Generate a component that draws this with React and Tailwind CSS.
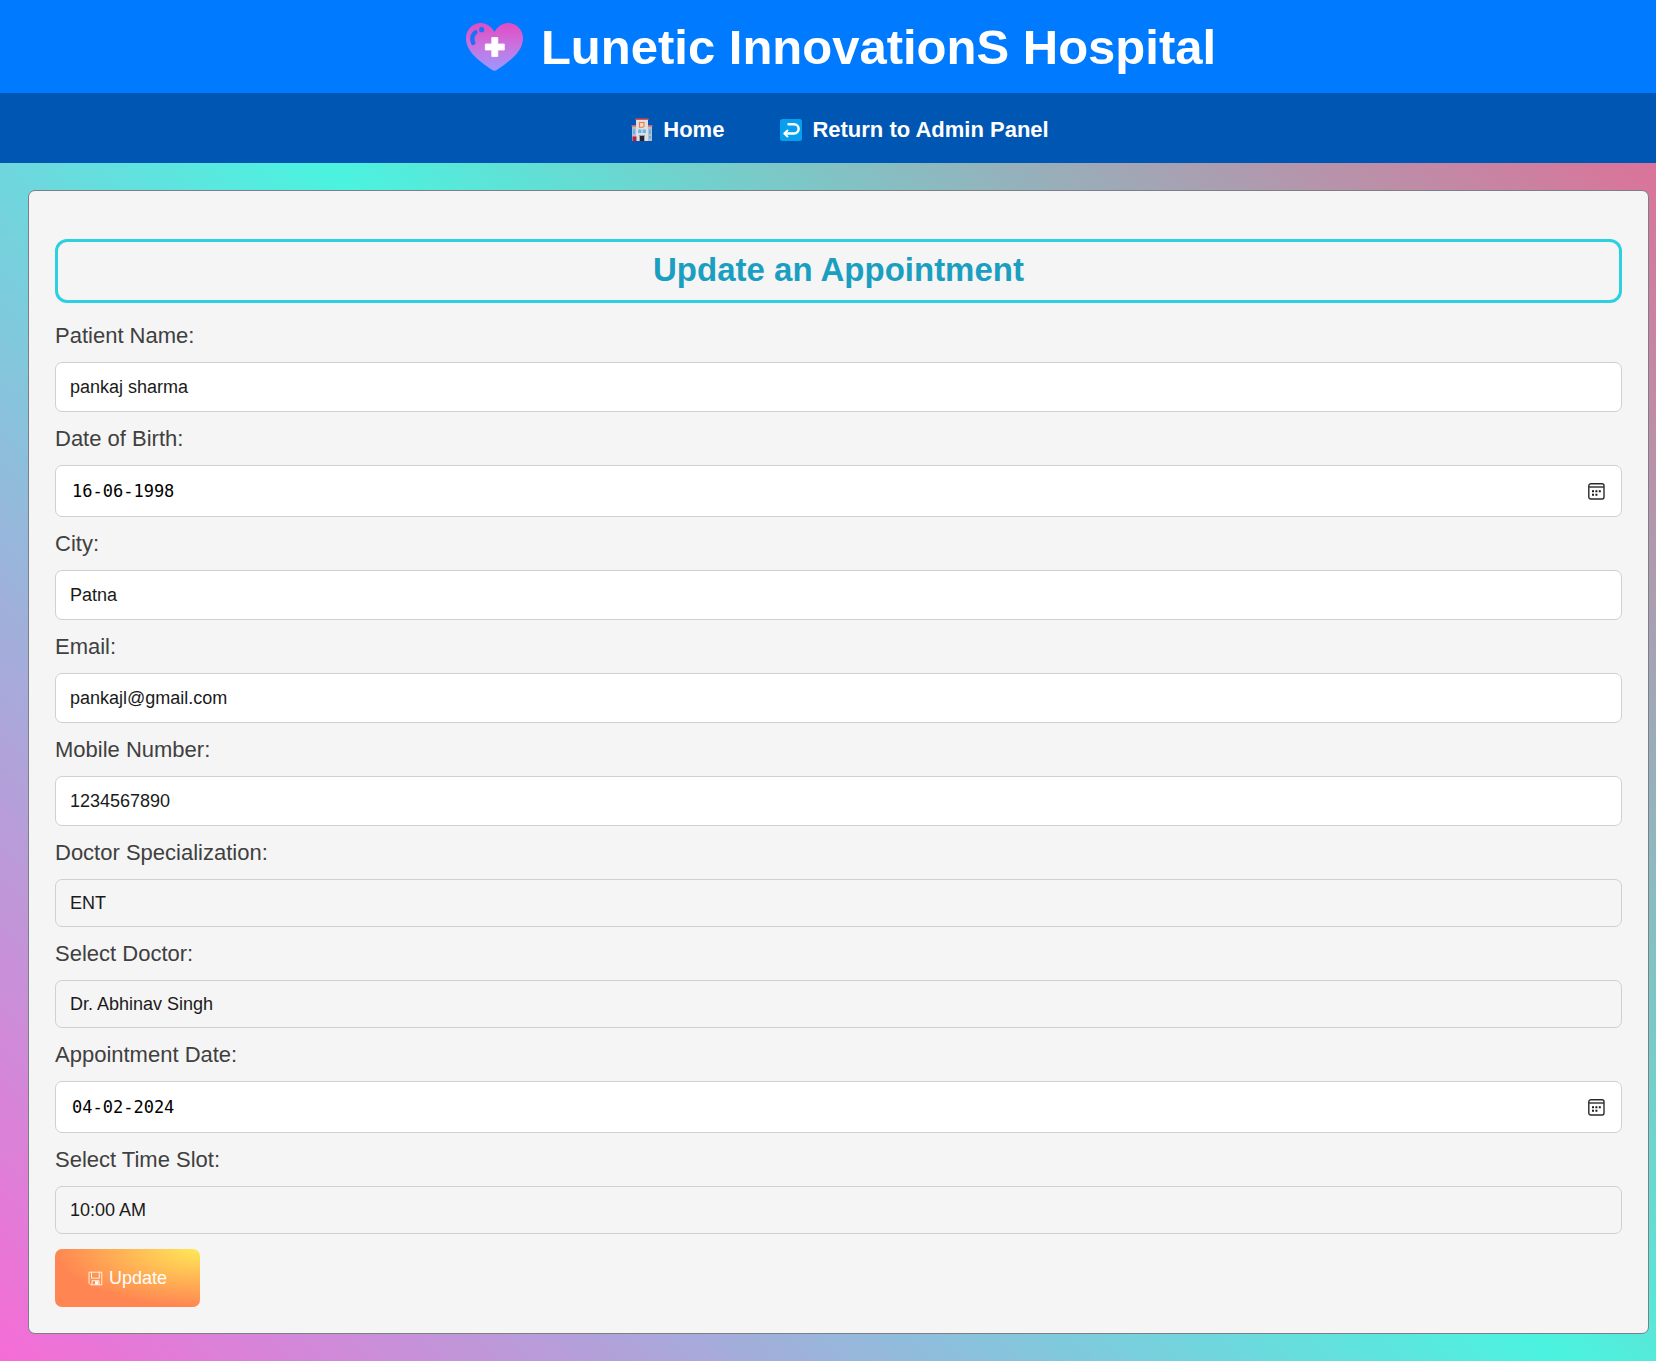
import { useState } from "react";

function HeartLogo() {
  return (
    <svg viewBox="0 0 57 48" className="h-12 w-[57px] shrink-0" aria-hidden="true">
      <defs>
        <linearGradient id="heart" x1="0" y1="0" x2="0" y2="1">
          <stop offset="0.05" stopColor="#e04fc6" />
          <stop offset="0.5" stopColor="#c873e0" />
          <stop offset="1" stopColor="#9a98ff" />
        </linearGradient>
      </defs>
      <path
        d="M28.500 9C25.500 3.500 20.500 0 15 0C6.500 0 0 6.700 0 15.200C0 29 14 38.500 25.800 46.700C27.500 48 29.500 48 31.200 46.700C43 38.500 57 29 57 15.200C57 6.700 50.500 0 42 0C36.500 0 31.500 3.500 28.500 9Z"
        fill="url(#heart)"
      />
      <path d="M9.500 9.300C6.500 11.500 5.600 15.500 7.200 20" fill="none" stroke="#1c72f6" strokeWidth="4.400" strokeLinecap="round" />
      <circle cx="15.700" cy="6.700" r="2.600" fill="#1c72f6" />
      <path d="M25.800 14.500h6v6.500h6.500v6h-6.500v6.500h-6v-6.500h-6.500v-6h6.500z" fill="#fff" stroke="#fff" strokeWidth="0.800" strokeLinejoin="round" />
    </svg>
  );
}

function HospitalIcon() {
  return (
    <svg viewBox="0 0 22 24" className="h-6 w-[22px] shrink-0" aria-hidden="true">
      <rect x="1" y="8" width="5" height="15" fill="#b4bfce" />
      <rect x="16" y="8" width="5" height="15" fill="#b4bfce" />
      <rect x="0.500" y="7" width="5" height="1.600" fill="#d9625f" />
      <rect x="16.500" y="7" width="5" height="1.600" fill="#d9625f" />
      <rect x="5" y="1.500" width="12" height="21.500" fill="#dfdee6" />
      <rect x="4.300" y="0.500" width="13.400" height="1.600" rx="0.500" fill="#e2504c" />
      <path d="M8.500 4.500h4.500v3.800l-1.200 1h-3.300z" fill="#f7dccb" stroke="#ef7a3c" strokeWidth="1.100" />
      <path d="M7.200 11.500h3.200v3.500H7.200zM11.600 11.500h3.200v3.500h-3.200zM2 11.500h2v4.500H2zM18 11.500h2v4.500h-2z" fill="#5cb4ea" />
      <path d="M18 18h2v2.500h-2z" fill="#5cb4ea" />
      <rect x="8" y="17" width="6" height="1.200" fill="#9aa3b2" />
      <rect x="8.700" y="18" width="4.600" height="5" fill="#23262f" />
      <rect x="1.500" y="18.500" width="4" height="4.500" fill="#b8243e" />
    </svg>
  );
}

function ReturnIcon() {
  return (
    <svg viewBox="0 0 22 22" className="size-[22px] shrink-0" aria-hidden="true">
      <rect width="22" height="22" rx="2.500" fill="#08a0ee" />
      <path d="M8.500 5.200h5.500a4.500 4.500 0 0 1 0 9.300H5.500" fill="none" stroke="#fff" strokeWidth="2.500" strokeLinecap="round" />
      <path d="M7.500 11.600l-3.200 2.900l3.200 2.900" fill="none" stroke="#fff" strokeWidth="2" strokeLinecap="round" strokeLinejoin="round" />
    </svg>
  );
}

function CalendarIcon() {
  return (
    <svg viewBox="0 0 17 17" className="size-[17px]" aria-hidden="true">
      <rect x="0.800" y="0.800" width="15.200" height="15.200" rx="2" fill="none" stroke="#2b2b2b" strokeWidth="1.400" />
      <path d="M1 4h15" stroke="#2b2b2b" strokeWidth="1.400" />
      <path d="M4 7.300h2v2H4zM7.400 7.300h2v2h-2zM10.800 7.300h2v2h-2zM4 10.700h2v2H4zM7.400 10.700h2v2h-2z" fill="#1c1c1c" />
    </svg>
  );
}

function SaveIcon() {
  return (
    <svg viewBox="0 0 15 15" className="size-[15px] shrink-0" aria-hidden="true" fill="none" stroke="#fff1e2" strokeWidth="1">
      <path d="M1 1.200h12.800v12.600H2.500L1 12.300z" />
      <path d="M3.500 1.200v6h7.800v-6" />
      <path d="M4 13.800V9.700h7v4.100" />
      <path d="M7 10.300h3.200v3.200H7z" fill="#fff" stroke="none" />
    </svg>
  );
}

const box = "w-full rounded-[7px] border border-[#d0d0d0] text-lg text-[#1a1a1a] outline-none";

function Field({ field }) {
  const [value, setValue] = useState(field.value);
  const onChange = (e) => setValue(e.target.value);
  return (
    <div>
      <label htmlFor={field.id} className="block py-3.5 text-[22px] leading-[25px] text-[#404040]">
        {field.label}
      </label>
      {field.kind === "date" && (
        <div className={`${box} flex h-[52px] items-center bg-white px-4`}>
          <input
            id={field.id}
            type="text"
            value={value}
            onChange={onChange}
            className="min-w-0 flex-1 bg-transparent font-['DejaVu_Sans_Mono',monospace] text-[17px] text-black outline-none"
          />
          <button type="button" aria-label={`Pick ${field.label}`}>
            <CalendarIcon />
          </button>
        </div>
      )}
      {field.kind === "select" && (
        <select id={field.id} value={value} onChange={onChange} className={`${box} block h-12 appearance-none bg-[#f5f5f5] px-3.5`}>
          <option>{field.value}</option>
        </select>
      )}
      {!field.kind && (
        <input id={field.id} type={field.type} value={value} onChange={onChange} className={`${box} block h-[50px] bg-white px-3.5`} />
      )}
    </div>
  );
}

const fields = [
  { id: "name", label: "Patient Name:", value: "pankaj sharma", type: "text" },
  { id: "dob", label: "Date of Birth:", value: "16-06-1998", kind: "date" },
  { id: "city", label: "City:", value: "Patna", type: "text" },
  { id: "email", label: "Email:", value: "pankajl@gmail.com", type: "email" },
  { id: "mobile", label: "Mobile Number:", value: "1234567890", type: "tel" },
  { id: "specialization", label: "Doctor Specialization:", value: "ENT", kind: "select" },
  { id: "doctor", label: "Select Doctor:", value: "Dr. Abhinav Singh", kind: "select" },
  { id: "date", label: "Appointment Date:", value: "04-02-2024", kind: "date" },
  { id: "slot", label: "Select Time Slot:", value: "10:00 AM", kind: "select" },
];

export default function App() {
  return (
    <div className="min-h-screen bg-[linear-gradient(44deg,#f56cd6_0%,#4bf3df_51%,#ee6290_100%)] pb-[27px] font-['Liberation_Sans',Arial,sans-serif]">
      <header className="flex items-center justify-center gap-[18px] bg-[#007bff] pt-[19px] pb-[18px] pl-[26px] text-white">
        <HeartLogo />
        <h1 className="text-[49px] leading-14 font-bold">Lunetic InnovationS Hospital</h1>
      </header>
      <nav className="flex justify-center gap-14 bg-[#0056b3] pt-6 pb-5 pl-6 text-[22px] leading-[26px] font-bold text-white">
        <a href="#home" className="flex items-center gap-2.5">
          <HospitalIcon />
          Home
        </a>
        <a href="#admin" className="flex items-center gap-2.5">
          <ReturnIcon />
          Return to Admin Panel
        </a>
      </nav>
      <main className="mt-[27px] mr-[7px] ml-7 rounded-[7px] border border-[#7c7f86] bg-[#f5f5f5] px-[26px] pt-12 pb-[26px]">
        <h2 className="mb-1.5 rounded-xl border-[3px] border-[#2dd0e0] pt-[9px] pb-[11px] text-center text-[33px] leading-[38px] font-bold text-[#1b9fc1]">
          Update an Appointment
        </h2>
        <form onSubmit={(e) => e.preventDefault()}>
          {fields.map((f) => (
            <Field key={f.id} field={f} />
          ))}
          <button
            type="submit"
            className="mt-[15px] flex h-[58px] items-center gap-1.5 rounded-[7px] bg-[radial-gradient(100%_100%_at_100%_0,#ffe957_0,#ff8652_100%)] px-[33px] text-lg text-white"
          >
            <SaveIcon />
            Update
          </button>
        </form>
      </main>
    </div>
  );
}
